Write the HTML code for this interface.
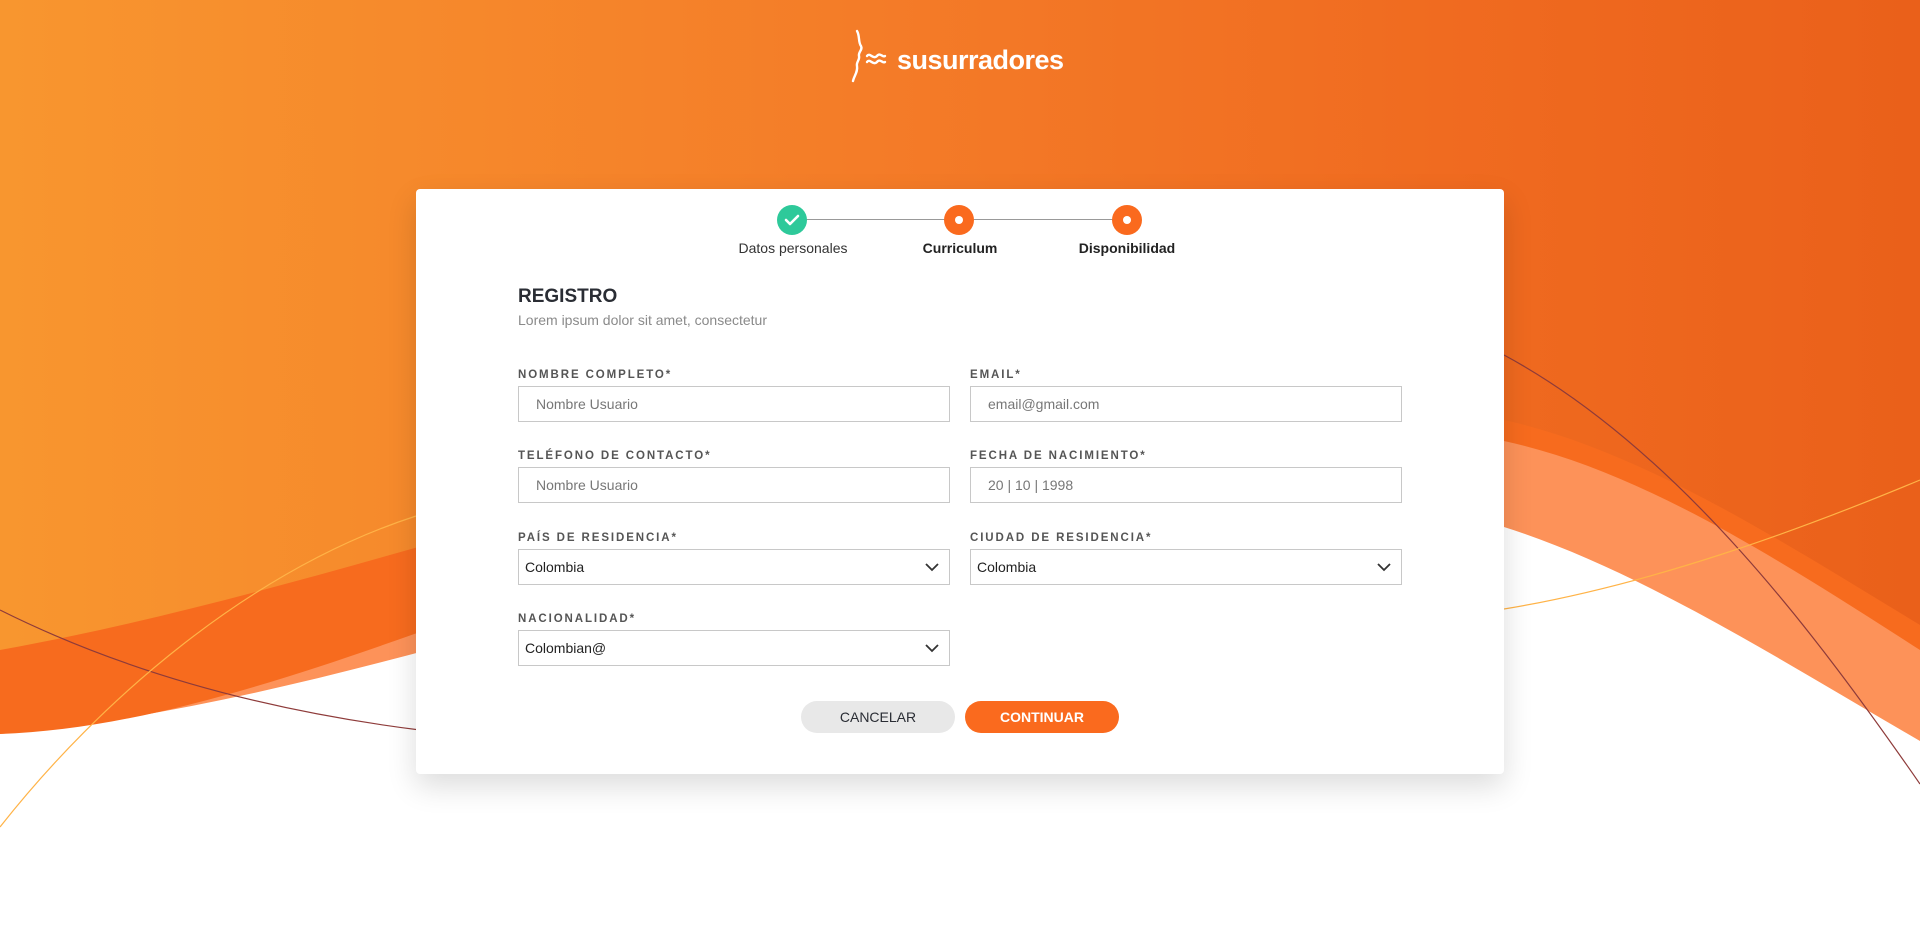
<!DOCTYPE html>
<html><head><meta charset="utf-8"><style>
*{margin:0;padding:0;box-sizing:border-box}
body{width:1920px;height:935px;overflow:hidden;position:relative;background:#fff;font-family:"Liberation Sans",sans-serif}
svg.bg{position:absolute;left:0;top:0}
.logo{position:absolute;left:850px;top:28px;height:56px;color:#fff}
.logo span{position:absolute;left:47px;top:17px;font-size:27px;font-weight:bold;letter-spacing:-0.5px;white-space:nowrap}
.card{position:absolute;left:416px;top:189px;width:1088px;height:585px;background:#fff;border-radius:4px;box-shadow:0 12px 30px rgba(0,0,0,.14)}
.step{position:absolute;font-size:14px;color:#333;transform:translateX(-50%);white-space:nowrap;top:51px}
.b{font-weight:bold;color:#222}
.circ{position:absolute;width:30px;height:30px;border-radius:50%;top:16px;margin-left:-15px}
.or{background:#fa6a1e}
.or:after{content:"";position:absolute;left:11px;top:11px;width:8px;height:8px;border-radius:50%;background:#fff}
.gr{background:#2ec99a}
h1{position:absolute;left:102px;top:97px;font-size:19px;color:#2a2d34;font-weight:bold}
.sub{position:absolute;left:102px;top:123px;font-size:14px;color:#8a8a8a}
.lbl{position:absolute;font-size:11.5px;letter-spacing:1.9px;color:#555;font-weight:bold}
.in{position:absolute;width:432px;height:36px;border:1px solid #c8c8c8;font-size:14px;color:#777;padding:10px 17px;line-height:14px}
.sel{color:#222;padding-left:6px}
.sel svg{position:absolute;right:10px;top:12px}
.btn{position:absolute;top:512px;width:154px;height:32px;border-radius:16px;font-size:14px;text-align:center;line-height:32px}
</style></head><body>
<svg class="bg" width="1920" height="935">
<defs>
<linearGradient id="g" x1="0" y1="0" x2="1" y2="0">
<stop offset="0" stop-color="#f8962f"/><stop offset="0.45" stop-color="#f47c28"/><stop offset="0.75" stop-color="#f06b20"/><stop offset="1" stop-color="#ea601a"/></linearGradient>
</defs>
<path d="M0,0H1920V741C1780,660 1640,570 1504,527C1000,390 500,690 0,734Z" fill="#fd9259"/>
<path d="M0,0H1920V650C1780,560 1640,470 1504,441C900,330 400,720 0,734Z" fill="#f76b1e"/>
<path d="M0,0H1920V625C1780,540 1640,450 1504,420C1000,300 500,560 0,650Z" fill="url(#g)"/>
<path d="M0,610C120,670 260,710 420,730" stroke="#8e3b3a" stroke-width="1.2" fill="none"/>
<path d="M1504,355C1680,450 1820,640 1920,784" stroke="#8e3b3a" stroke-width="1.2" fill="none"/>
<path d="M0,827C100,700 250,570 416,516" stroke="#ffb347" stroke-width="1.2" fill="none"/>
<path d="M1504,609C1650,585 1800,530 1920,480" stroke="#ffb347" stroke-width="1.2" fill="none"/>
</svg>
<div class="logo">
<svg width="46" height="56" viewBox="0 0 46 56" fill="none" stroke="#fff" stroke-width="2.4" stroke-linecap="round"><path d="M7,3C10,8 8,14 11,18C13,22 8,24 9,28C10,32 6,34 7,38C8,44 4,48 3,53"/><path d="M17,28C20,24 23,32 27,28C30,24 33,30 35,28"/><path d="M17,34C20,30 23,38 27,34C30,30 33,36 35,34"/></svg>
<span>susurradores</span></div>
<div class="card">
<div style="position:absolute;left:376px;top:30px;width:335px;height:1px;background:#999"></div>
<div class="circ gr" style="left:376px"><svg width="30" height="30"><path d="M9,15l4,4 8,-8" stroke="#fff" stroke-width="2.6" fill="none" stroke-linecap="round" stroke-linejoin="round"/></svg></div>
<div class="circ or" style="left:543px"></div>
<div class="circ or" style="left:711px"></div>
<div class="step" style="left:377px">Datos personales</div>
<div class="step b" style="left:544px">Curriculum</div>
<div class="step b" style="left:711px">Disponibilidad</div>
<h1>REGISTRO</h1>
<div class="sub">Lorem ipsum dolor sit amet, consectetur</div>
<div class="lbl" style="left:102px;top:180px">NOMBRE COMPLETO*</div>
<div class="lbl" style="left:554px;top:180px">EMAIL*</div>
<div class="in" style="left:102px;top:197px">Nombre Usuario</div>
<div class="in" style="left:554px;top:197px">email@gmail.com</div>
<div class="lbl" style="left:102px;top:261px">TELÉFONO DE CONTACTO*</div>
<div class="lbl" style="left:554px;top:261px">FECHA DE NACIMIENTO*</div>
<div class="in" style="left:102px;top:278px">Nombre Usuario</div>
<div class="in" style="left:554px;top:278px">20 | 10 | 1998</div>
<div class="lbl" style="left:102px;top:343px">PAÍS DE RESIDENCIA*</div>
<div class="lbl" style="left:554px;top:343px">CIUDAD DE RESIDENCIA*</div>
<div class="in sel" style="left:102px;top:360px">Colombia<svg width="14" height="10"><path d="M1,2l6,6 6,-6" stroke="#333" stroke-width="1.8" fill="none"/></svg></div>
<div class="in sel" style="left:554px;top:360px">Colombia<svg width="14" height="10"><path d="M1,2l6,6 6,-6" stroke="#333" stroke-width="1.8" fill="none"/></svg></div>
<div class="lbl" style="left:102px;top:424px">NACIONALIDAD*</div>
<div class="in sel" style="left:102px;top:441px">Colombian@<svg width="14" height="10"><path d="M1,2l6,6 6,-6" stroke="#333" stroke-width="1.8" fill="none"/></svg></div>
<div class="btn" style="left:385px;background:#e8e8e8;color:#2a2d34">CANCELAR</div>
<div class="btn" style="left:549px;background:#fa6a1e;color:#fff;font-weight:bold">CONTINUAR</div>
</div>
</body></html>
